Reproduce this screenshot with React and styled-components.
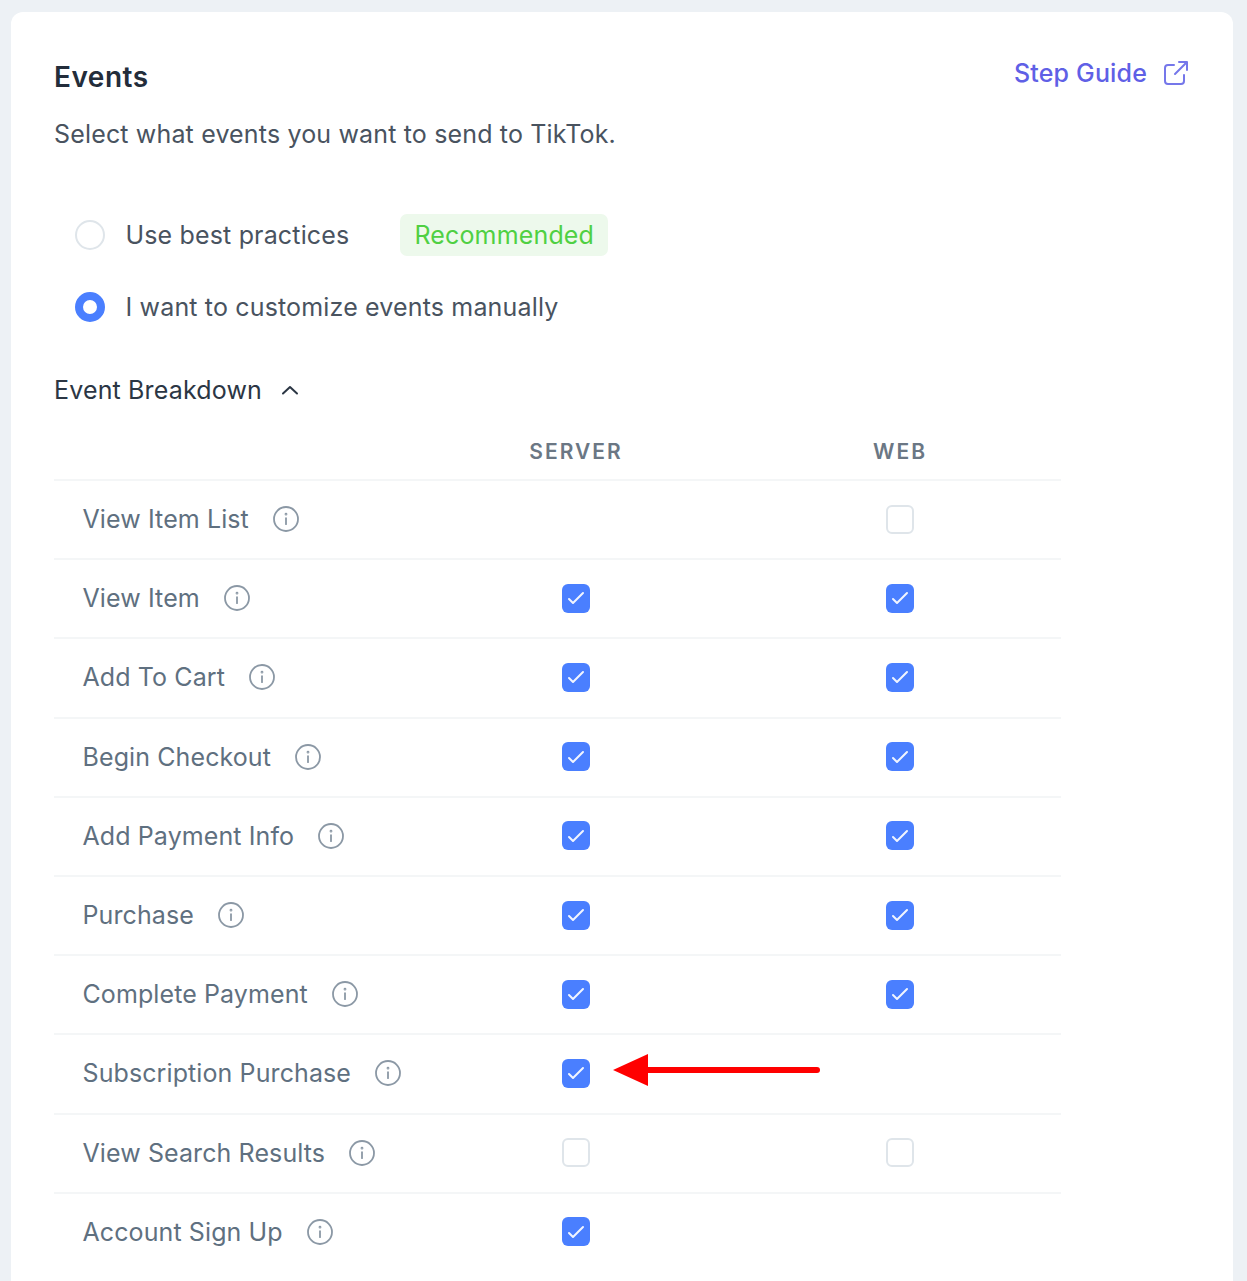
import React from 'react';
import styled, { createGlobalStyle } from 'styled-components';

const GlobalStyle = createGlobalStyle`
  html, body {
    margin: 0;
    height: 1281px;
    overflow: hidden;
    background: #edf1f5;
    font-family: Inter, 'Liberation Sans', sans-serif;
    letter-spacing: 0.16px;
  }
`;

const Page = styled.div`
  padding: 12px 14px 0 11px;
`;

const Card = styled.section`
  position: relative;
  height: 1269px;
  box-sizing: border-box;
  padding: 44px 44px 0 43px;
  background: #fff;
  border-radius: 12px 12px 0 0;
`;

const Header = styled.header`
  display: flex;
  justify-content: space-between;
  align-items: flex-start;
`;

const Title = styled.h2`
  margin: 0;
  font-size: 28px;
  line-height: 42px;
  font-weight: 600;
  letter-spacing: 0.5px;
  color: #232d3b;
`;

const GuideLink = styled.a`
  display: flex;
  align-items: center;
  gap: 16px;
  height: 34px;
  font-size: 25px;
  font-weight: 500;
  color: #5f60e6;
`;

const Subtitle = styled.p`
  margin: 18px 0 0;
  font-size: 25px;
  line-height: 36px;
  color: #49535f;
`;

const Options = styled.div`
  display: flex;
  flex-direction: column;
  gap: 30px;
  margin: 62px 0 0 21px;
`;

const Option = styled.label`
  display: flex;
  align-items: center;
  height: 42px;
  font-size: 25px;
  color: #49535f;
`;

const Radio = styled.span`
  width: 30px;
  height: 30px;
  box-sizing: border-box;
  margin-right: 20.5px;
  border-radius: 50%;
  background: #fff;
  border: ${(p) => (p.$checked ? '8px solid #4a7fff' : '2px solid #dfe5ea')};
`;

const Badge = styled.span`
  display: flex;
  align-items: center;
  height: 42px;
  margin-left: 51px;
  padding: 0 14px;
  border-radius: 7px;
  background: #edf9ec;
  color: #4fd043;
`;

const BreakdownToggle = styled.div`
  display: flex;
  align-items: center;
  gap: 19px;
  height: 36px;
  margin-top: 44px;
  font-size: 25px;
  color: #2b3644;
`;

const Table = styled.div`
  width: 1007px;
  margin-top: 25px;
`;

const ColumnHeads = styled.div`
  display: grid;
  grid-template-columns: 360px 324px 324px;
  align-items: center;
  height: 36px;
  margin-bottom: 10px;
  font-size: 21px;
  font-weight: 600;
  letter-spacing: 2px;
  color: #6b7784;
  text-align: center;
`;

const Row = styled.div`
  display: grid;
  grid-template-columns: 360px 324px 324px;
  align-items: center;
  height: 79.2px;
  box-sizing: border-box;
  padding-bottom: 1px;
  border-top: 2px solid #f4f6f7;
`;

const EventName = styled.div`
  display: flex;
  align-items: center;
  gap: 24px;
  padding-left: 28.5px;
  font-size: 25px;
  letter-spacing: 0.1px;
  color: #5f7080;
`;

const CheckCell = styled.div`
  display: flex;
  justify-content: center;
`;

const Checkbox = styled.span`
  display: flex;
  align-items: center;
  justify-content: center;
  width: 28.5px;
  height: 29px;
  box-sizing: border-box;
  border-radius: 6px;
  background: ${(p) => (p.$checked ? '#4a7fff' : '#fff')};
  border: ${(p) => (p.$checked ? 'none' : '2px solid #dfe5ea')};
`;

const Arrow = styled.svg`
  position: absolute;
  left: 600px;
  top: 1040px;
`;

const InfoIcon = () => (
  <svg width="26" height="26" viewBox="0 0 26 26" fill="none" stroke="#8b98a5" strokeWidth="1.8" strokeLinecap="round">
    <circle cx="13" cy="13" r="12" />
    <path d="M13 12.2v6" />
    <circle cx="13" cy="8.2" r="0.5" />
  </svg>
);

const CheckMark = () => (
  <svg width="18" height="14" viewBox="0 0 18 14" fill="none" stroke="#fff" strokeWidth="2" strokeLinecap="round" strokeLinejoin="round">
    <path d="M2 8l4 4L16 2" opacity="0.92" />
  </svg>
);

const ExternalIcon = () => (
  <svg width="26" height="26" viewBox="0 0 26 26" fill="none" stroke="#7577ea" strokeWidth="2" strokeLinecap="round" strokeLinejoin="round">
    <path d="M11 5H5a3 3 0 0 0-3 3v13a3 3 0 0 0 3 3h13a3 3 0 0 0 3-3v-6" />
    <path d="M12 14L24 2M16 2h8v8" />
  </svg>
);

const Chevron = () => (
  <svg width="18" height="10" viewBox="0 0 18 10" fill="none" stroke="#2b3644" strokeWidth="2" strokeLinecap="round" strokeLinejoin="round">
    <path d="M2 8.5L9 2l7 6.5" />
  </svg>
);

const events = [
  { name: 'View Item List', server: null, web: false },
  { name: 'View Item', server: true, web: true },
  { name: 'Add To Cart', server: true, web: true },
  { name: 'Begin Checkout', server: true, web: true },
  { name: 'Add Payment Info', server: true, web: true },
  { name: 'Purchase', server: true, web: true },
  { name: 'Complete Payment', server: true, web: true },
  { name: 'Subscription Purchase', server: true, web: null },
  { name: 'View Search Results', server: false, web: false },
  { name: 'Account Sign Up', server: true, web: null },
];

const Cell = ({ value }) => (
  <CheckCell>
    {value !== null && <Checkbox $checked={value}>{value && <CheckMark />}</Checkbox>}
  </CheckCell>
);

export default function App() {
  return (
    <Page>
      <GlobalStyle />
      <Card>
        <Header>
          <Title>Events</Title>
          <GuideLink>
            Step Guide
            <ExternalIcon />
          </GuideLink>
        </Header>
        <Subtitle>Select what events you want to send to TikTok.</Subtitle>
        <Options>
          <Option>
            <Radio />
            Use best practices
            <Badge>Recommended</Badge>
          </Option>
          <Option>
            <Radio $checked />
            I want to customize events manually
          </Option>
        </Options>
        <BreakdownToggle>
          Event Breakdown
          <Chevron />
        </BreakdownToggle>
        <Table>
          <ColumnHeads>
            <span />
            <span>SERVER</span>
            <span>WEB</span>
          </ColumnHeads>
          {events.map((e) => (
            <Row key={e.name}>
              <EventName>
                {e.name}
                <InfoIcon />
              </EventName>
              <Cell value={e.server} />
              <Cell value={e.web} />
            </Row>
          ))}
        </Table>
        <Arrow width="225" height="40" viewBox="0 0 225 40">
          <path d="M2 18L37 2v32z" fill="#ff0000" />
          <path d="M36 18h170" stroke="#ff0000" strokeWidth="6" strokeLinecap="round" />
        </Arrow>
      </Card>
    </Page>
  );
}
